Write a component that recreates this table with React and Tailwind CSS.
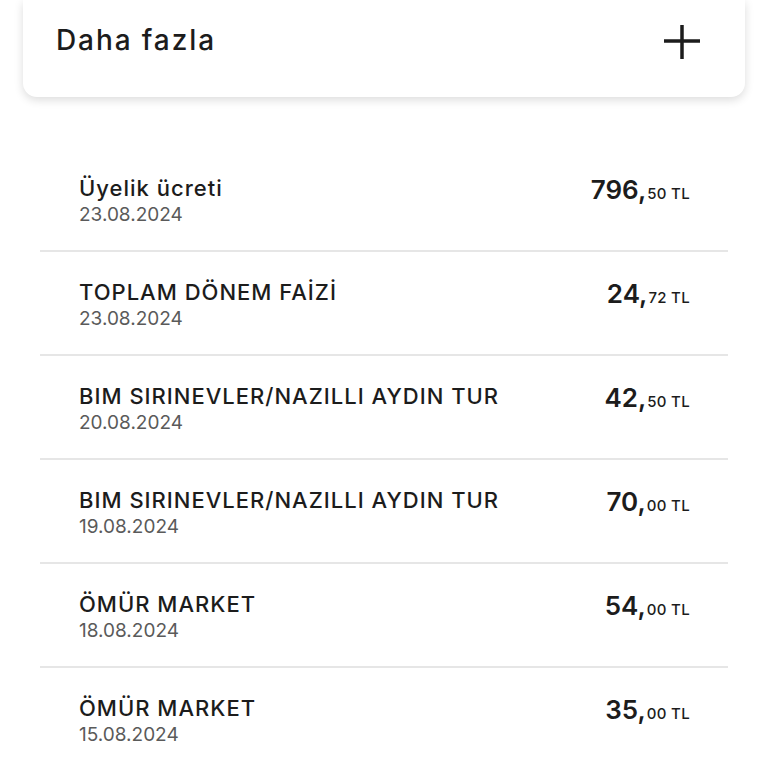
const rows = [
  { title: "Üyelik ücreti", date: "23.08.2024", whole: "796", cents: "50" },
  { title: "TOPLAM DÖNEM FAİZİ", date: "23.08.2024", whole: "24", cents: "72" },
  { title: "BIM SIRINEVLER/NAZILLI AYDIN TUR", date: "20.08.2024", whole: "42", cents: "50" },
  { title: "BIM SIRINEVLER/NAZILLI AYDIN TUR", date: "19.08.2024", whole: "70", cents: "00" },
  { title: "ÖMÜR MARKET", date: "18.08.2024", whole: "54", cents: "00" },
  { title: "ÖMÜR MARKET", date: "15.08.2024", whole: "35", cents: "00" },
];

export default function App() {
  return (
    <div
      className="w-[768px] h-[768px] overflow-hidden bg-white text-[#1c1c1c]"
      style={{ fontFamily: "Inter, Lato, sans-serif" }}
    >
      {/* header card */}
      <div className="px-[23px]">
        <div className="h-[97px] rounded-b-[14px] bg-white shadow-[0_3px_10px_rgba(0,0,0,0.14)] flex items-center justify-between pl-[33px] pr-[44px]">
          <span className="text-[28px] font-medium tracking-[1.9px] -mt-[17px]">Daha fazla</span>
          <svg width="38" height="38" viewBox="0 0 38 38" className="-mt-[16px]">
            <path d="M19 3v34M1 19h36" stroke="#1c1c1c" strokeWidth="3.5" />
          </svg>
        </div>
      </div>

      {/* transactions */}
      <div className="mt-[51px] mx-[40px]">
        {rows.map((r, i) => (
          <div
            key={i}
            className="h-[104px] border-b-2 border-[#e6e6e6] flex items-start justify-between pl-[39px] pr-[38px] pt-[26px]"
          >
            <div className="flex flex-col">
              <span className="text-[22px] font-medium leading-[28px] tracking-[1px]">{r.title}</span>
              <span className="text-[19px] leading-[25px] text-[#5a5a5a]">{r.date}</span>
            </div>
            <div className="flex items-baseline pt-[1px]">
              <span className="text-[26px] font-semibold leading-[30px]">{r.whole},</span>
              <span className="text-[15px] font-medium ml-[1px] tracking-[0.3px]">{r.cents} TL</span>
            </div>
          </div>
        ))}
      </div>
    </div>
  );
}
